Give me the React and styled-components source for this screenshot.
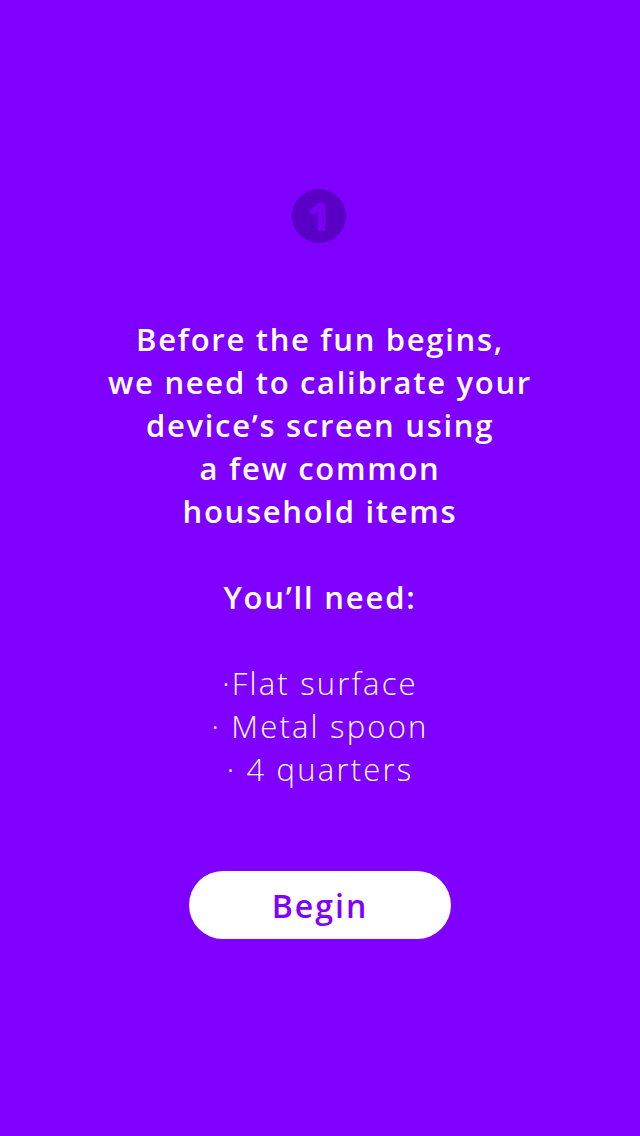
import React from 'react';
import styled, { createGlobalStyle } from 'styled-components';

const GlobalStyle = createGlobalStyle`
	html, body {
		margin: 0;
		padding: 0;
		background: #7f00ff;
	}
	body {
		font-family: 'Open Sans', Lato, sans-serif;
	}
`;

export default function App() {
	const items = ['·Flat surface', '· Metal spoon', '· 4 quarters'];

	return (
		<Screen>
			<GlobalStyle />
			<StepBadge>1</StepBadge>
			<Intro>
				Before the fun begins,
				<br />
				we need to calibrate your
				<br />
				device’s screen using
				<br />a few common
				<br />
				household items
			</Intro>
			<NeedTitle>You’ll need:</NeedTitle>
			<ItemList>
				{items.map((item) => (
					<Item key={item}>{item}</Item>
				))}
			</ItemList>
			<BeginButton>Begin</BeginButton>
		</Screen>
	);
}

const Screen = styled.main`
	width: 640px;
	height: 1136px;
	box-sizing: border-box;
	padding-top: 189px;
	display: flex;
	flex-direction: column;
	align-items: center;
	background: #7f00ff;
	color: #ffffff;
	text-align: center;
`;

const StepBadge = styled.div`
	width: 54px;
	height: 54px;
	border-radius: 50%;
	background: #5a00c6;
	color: #7a00f4;
	display: flex;
	align-items: center;
	justify-content: center;
	font-family: 'Open Sans', sans-serif;
	font-size: 38px;
	font-weight: 800;
	line-height: 1;
	margin-left: -2px;
`;

const Intro = styled.p`
	margin: 75px 0 0;
	font-size: 31px;
	font-weight: 600;
	line-height: 43px;
	letter-spacing: 1.7px;
`;

const NeedTitle = styled.h2`
	margin: 43px 0 0;
	font-size: 31px;
	font-weight: 600;
	line-height: 43px;
	letter-spacing: 1.8px;
`;

const ItemList = styled.ul`
	margin: 43px 0 0;
	padding: 0;
	list-style: none;
`;

const Item = styled.li`
	font-size: 31px;
	font-weight: 300;
	line-height: 43px;
	letter-spacing: 2.2px;
`;

const BeginButton = styled.button`
	margin-top: 80px;
	width: 262px;
	height: 68px;
	border: none;
	border-radius: 34px;
	background: #ffffff;
	color: #7f00ff;
	font-family: 'Open Sans', Lato, sans-serif;
	font-size: 32px;
	font-weight: 600;
	letter-spacing: 2px;
	cursor: pointer;
`;
